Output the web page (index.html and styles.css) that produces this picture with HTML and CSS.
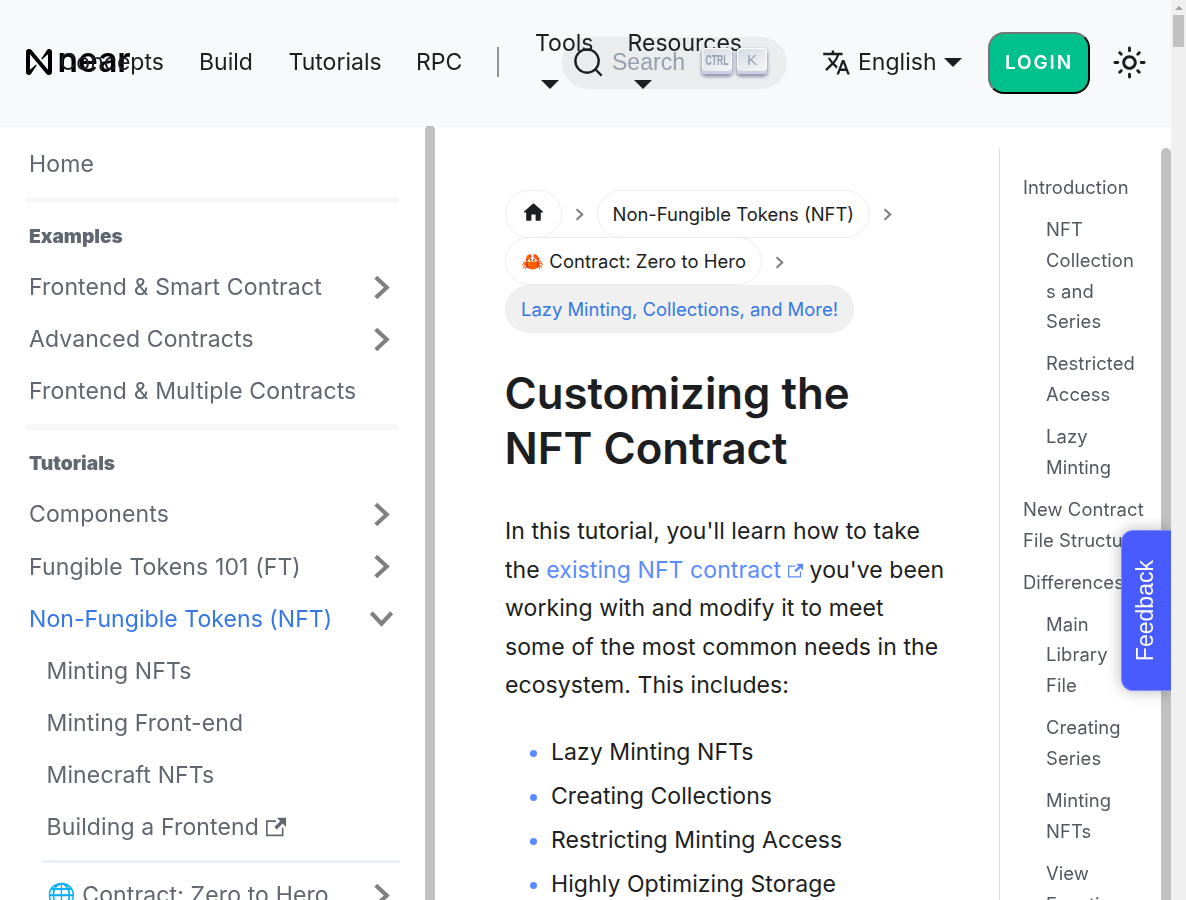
FILE: index.html
```html
<!DOCTYPE html>
<html lang="en">
<head>
<meta charset="utf-8">
<title>Customizing the NFT Contract</title>
<link rel="stylesheet" href="styles.css">
</head>
<body>
<svg class="defs" width="0" height="0">
  <symbol id="chev" viewBox="0 0 24 24"><path d="M6.5 2.2L17 12 6.500 21.800" fill="none" stroke="currentColor" stroke-width="4"/></symbol>
  <symbol id="ext" viewBox="0 0 24 24"><path fill="currentColor" d="M21 13v10h-21v-19h12v2h-10v15h17v-8h2zm3-12h-10.988l4.035 4-6.977 7.07 2.828 2.828 6.977-7.07 4.125 4.172v-11z"/></symbol>
</svg>
<div class="page">
  <header class="navbar">
    <a class="brand">
      <svg class="brand-mark" viewBox="0 0 90 90"><path d="M72.2,4.600L53.400,32.500c-1.300,1.900,1.200,4.200,3,2.600L74.900,19c.5-.4,1.200-.1,1.200.6v50.300c0,.7-.9,1-1.300.5L19,3.500C17.200,1.300,14.500,0,11.600,0H9.600C4.300,0,0,4.300,0,9.600v70.800C0,85.700,4.300,90,9.600,90c3.300,0,6.400-1.700,8.200-4.600l18.800-27.900c1.300-1.900-1.200-4.200-3-2.600L15.100,70.900c-.5.4-1.200.1-1.200-.6V20.100c0-.7.9-1,1.300-.5l55.800,66.900c1.800,2.200,4.600,3.500,7.400,3.500h2c5.300,0,9.600-4.300,9.600-9.600V9.600C90,4.300,85.700,0,80.400,0c-3.300,0-6.400,1.700-8.200,4.600z"/></svg>
      <span class="brand-name">near</span>
    </a>
    <nav class="links">
      <a class="concepts">Concepts</a><a class="build">Build</a><a class="tutorials">Tutorials</a><a class="rpc">RPC</a>
      <span class="sep"></span>
      <a class="drop tools">Tools<i class="caret"></i></a>
      <a class="drop resources">Resources<i class="caret"></i></a>
    </nav>
    <div class="search">
      <svg class="search-icon" viewBox="0 0 20 20"><path d="M14.386 14.386l4.0877 4.0877-4.0877-4.0877c-2.9418 2.9419-7.7115 2.9419-10.6533 0-2.9419-2.9418-2.9419-7.7115 0-10.6533 2.9418-2.9419 7.7115-2.9419 10.6533 0 2.9419 2.9418 2.9419 7.7115 0 10.6533z"/></svg>
      <span class="search-label">Search</span>
      <span class="key"><span class="ctrl">CTRL</span></span><span class="key">K</span>
    </div>
    <div class="tools-right">
      <svg class="translate" viewBox="0 0 24 24"><path fill="currentColor" d="M12.87 15.07l-2.54-2.51.03-.03c1.74-1.94 2.98-4.17 3.71-6.53H17V4h-7V2H8v2H1v1.99h11.17C11.5 7.92 10.44 9.75 9 11.35 8.07 10.32 7.3 9.19 6.69 8h-2c.73 1.63 1.73 3.17 2.98 4.56l-5.09 5.02L4 19l5-5 3.11 3.11.76-2.04zM18.5 10h-2L12 22h2l1.12-3h4.75L21 22h2l-4.5-12zm-2.62 7l1.62-4.33L19.12 17h-3.24z"/></svg>
      <a class="lang">English</a><i class="caret"></i>
      <button class="login">LOGIN</button>
      <svg class="sun" viewBox="0 0 24 24"><path fill="currentColor" d="M12,9c1.65,0,3,1.35,3,3s-1.35,3-3,3s-3-1.35-3-3S10.35,9,12,9 M12,7c-2.76,0-5,2.24-5,5s2.24,5,5,5s5-2.24,5-5 S14.76,7,12,7L12,7z M2,13l2,0c0.55,0,1-0.45,1-1s-0.45-1-1-1l-2,0c-0.55,0-1,0.45-1,1S1.45,13,2,13z M20,13l2,0c0.55,0,1-0.45,1-1 s-0.45-1-1-1l-2,0c-0.55,0-1,0.45-1,1S19.45,13,20,13z M11,2v2c0,0.55,0.45,1,1,1s1-0.45,1-1V2c0-0.55-0.45-1-1-1S11,1.45,11,2z M11,20v2c0,0.55,0.45,1,1,1s1-0.45,1-1v-2c0-0.55-0.45-1-1-1C11.45,19,11,19.45,11,20z M5.99,4.58c-0.39-0.39-1.03-0.39-1.41,0 c-0.39,0.39-0.39,1.03,0,1.41l1.06,1.06c0.39,0.39,1.03,0.39,1.41,0s0.39-1.03,0-1.41L5.99,4.58z M18.36,16.95 c-0.39-0.39-1.03-0.39-1.41,0c-0.39,0.39-0.39,1.03,0,1.41l1.06,1.06c0.39,0.39,1.03,0.39,1.41,0c0.39-0.39,0.39-1.03,0-1.41 L18.36,16.95z M19.42,5.99c0.39-0.39,0.39-1.03,0-1.41c-0.39-0.39-1.03-0.39-1.41,0l-1.06,1.06c-0.39,0.39-0.39,1.03,0,1.41 s1.03,0.39,1.41,0L19.42,5.99z M7.05,18.36c0.39-0.39,0.39-1.03,0-1.41c-0.39-0.39-1.03-0.39-1.41,0l-1.06,1.06 c-0.39,0.39-0.39,1.03,0,1.41s1.03,0.39,1.41,0L7.05,18.36z"/></svg>
    </div>
  </header>
  <div class="body">
    <aside class="sidebar">
      <div class="menu">
        <a class="row">Home</a>
        <div class="rule"></div>
        <div class="heading">Examples</div>
        <a class="row">Frontend &amp; Smart Contract<svg class="chev"><use href="#chev"/></svg></a>
        <a class="row">Advanced Contracts<svg class="chev"><use href="#chev"/></svg></a>
        <a class="row">Frontend &amp; Multiple Contracts</a>
        <div class="rule"></div>
        <div class="heading">Tutorials</div>
        <a class="row">Components<svg class="chev"><use href="#chev"/></svg></a>
        <a class="row">Fungible Tokens 101 (FT)<svg class="chev"><use href="#chev"/></svg></a>
        <a class="row active">Non-Fungible Tokens (NFT)<svg class="chev open"><use href="#chev"/></svg></a>
        <a class="row sub">Minting NFTs</a>
        <a class="row sub">Minting Front-end</a>
        <a class="row sub">Minecraft NFTs</a>
        <a class="row sub">Building a Frontend<svg class="ext-menu"><use href="#ext"/></svg></a>
        <div class="rule sub-rule"></div>
        <a class="row sub">🌐 Contract: Zero to Hero<svg class="chev"><use href="#chev"/></svg></a>
      </div>
      <div class="track"></div>
    </aside>
    <main class="content">
      <div class="crumbs">
        <div class="crumb-line">
          <a class="pill home"><svg viewBox="0 0 24 24"><path fill="currentColor" d="M10 19v-5h4v5c0 .55.45 1 1 1h3c.55 0 1-.45 1-1v-7h1.700c.46 0 .68-.57.33-.87L12.670 3.600c-.38-.34-.96-.34-1.340 0l-8.360 7.530c-.34.3-.13.87.33.87H5v7c0 .55.45 1 1 1h3c.55 0 1-.45 1-1z"/></svg></a><svg class="crumb-chev"><use href="#chev"/></svg>
          <a class="pill">Non-Fungible Tokens (NFT)</a><svg class="crumb-chev"><use href="#chev"/></svg>
        </div>
        <div class="crumb-line"><a class="pill hero">🦀 Contract: Zero to Hero</a><svg class="crumb-chev"><use href="#chev"/></svg></div>
        <div class="crumb-line"><a class="pill current">Lazy Minting, Collections, and More!</a></div>
      </div>
      <h1>Customizing the<br>NFT Contract</h1>
      <p class="lead">In this tutorial, you'll learn how to take<br>the <a class="link">existing NFT contract<svg class="ext-link"><use href="#ext"/></svg></a> you've been<br>working with and modify it to meet<br>some of the most common needs in the<br>ecosystem. This includes:</p>
      <ul class="list"><li>Lazy Minting NFTs</li><li>Creating Collections</li><li>Restricting Minting Access</li><li>Highly Optimizing Storage</li></ul>
    </main>
    <aside class="toc">
      <div class="toc-list">
        <a>Introduction</a>
        <a class="in">NFT<br>Collection<br>s and<br>Series</a>
        <a class="in">Restricted<br>Access</a>
        <a class="in">Lazy<br>Minting</a>
        <a>New Contract<br>File Structure</a>
        <a>Differences</a>
        <a class="in">Main<br>Library<br>File</a>
        <a class="in">Creating<br>Series</a>
        <a class="in">Minting<br>NFTs</a>
        <a class="in">View<br>Function</a>
      </div>
      <div class="track rounded"></div>
    </aside>
  </div>
  <div class="feedback"><span>Feedback</span></div>
</div>
<div class="scrollbar"><i class="up"></i><div class="thumb"></div></div>
</body>
</html>
```
FILE: styles.css
```css
* { box-sizing: border-box; }
html, body { height: 100%; }
body { margin: 0; display: flex; overflow: hidden; background: #fff; color: #1c1e21; font-family: Inter, "Noto Sans", sans-serif; font-size: 23.040px; text-rendering: optimizeLegibility; }
.defs { position: absolute; }
svg { flex: none; }
.page { position: relative; width: 1171px; height: 900px; overflow: hidden; display: flex; flex-direction: column; }

.navbar { position: relative; z-index: 2; flex: none; height: 126px; padding: 0 24px 1px 26px; display: flex; align-items: center; background: #f7f9fb; box-shadow: 0 1px 1px rgba(0,0,0,.04); will-change: transform; }
.brand { display: flex; align-items: center; width: 33.500px; color: #000; white-space: nowrap; }
.brand-mark { width: 26px; height: 26px; margin-right: 5.500px; margin-top: -1px; }
.brand-name { font-size: 33.500px; font-weight: 600; line-height: 30px; letter-spacing: 0; margin-top: -5px; }
.links { position: relative; display: flex; align-items: center; height: 100%; margin-top: -1px; white-space: nowrap; }
.concepts { width: 139.500px; }
.build { width: 89.500px; }
.tutorials { width: 127.500px; }
.rpc { width: 81px; }
.sep { width: 2px; height: 30px; background: #909296; margin-right: 36px; }
.drop { display: flex; flex-direction: column; gap: 23px; width: 92.500px; line-height: 28px; margin-top: -6px; }
.caret { width: 0; height: 0; border: 9px solid transparent; border-top-color: #1c1e21; border-bottom: 0; }
.drop .caret { margin-left: 6px; }

.search { position: absolute; left: 562px; top: 37px; width: 225px; height: 52px; border-radius: 26px; background: rgba(28,30,33,.06); display: flex; align-items: center; padding-left: 11px; }
.search-icon { width: 31px; height: 31px; margin-right: 8px; margin-top: -1px; fill: none; stroke: #1c1e21; stroke-width: 1.500; stroke-linecap: round; }
.search-label { width: 89.500px; margin-top: -2px; color: #969faf; font: 23.040px "Liberation Sans", sans-serif; }
.key { width: 30px; height: 26px; margin-right: 5.500px; margin-top: -4px; border-radius: 4px; background: linear-gradient(-26deg, #f8f8f8, #d5dbe4); box-shadow: inset 0 -3px 0 0 #cdcde6, inset 0 0 1px 1px #fff, 0 2px 3px 1px rgba(30,35,90,.4); color: #969faf; display: flex; align-items: center; justify-content: center; font: 15px/1 "Liberation Sans", sans-serif; padding-bottom: 4px; }
.ctrl { font-size: 15px; font-weight: 700; transform: scaleX(.58); }

.tools-right { margin-left: auto; margin-top: -1px; display: flex; align-items: center; }
.translate { width: 29px; height: 29px; margin-right: 7.500px; }
.lang { width: 86px; }
.login { width: 102px; height: 62px; margin: 1px 22px 0 26px; padding: 0; border: 2px outset #1c1e21; border-color: #767676 #1c1e21 #1c1e21 #767676; border-radius: 16px; background: #00c08b; color: #fff; font: 600 19px Inter, sans-serif; letter-spacing: 1.900px; }
.sun { width: 35px; height: 35px; }

.body { flex: 1; min-height: 0; display: flex; margin-top: -1px; }
.sidebar { width: 435px; flex: none; display: flex; will-change: transform; overflow: hidden; }
.menu { width: 425px; padding: 13px 26px 0; color: #606770; letter-spacing: .12px; }
.row { display: flex; align-items: center; height: 52.1px; padding: 0 5px 0 3px; white-space: nowrap; }
.row.sub { padding-left: 20.500px; }
.row.active { color: #3578e5; letter-spacing: .05px; }
.rule { height: 6px; margin: 7px 0 7px; background: #f7f7f7; }
.sub-rule { height: 3px; margin: 7px -1px 6px 16px; background: #e7f0fb; }
.heading { height: 51px; line-height: 53px; padding-left: 3px; font-size: 19.200px; font-weight: 900; letter-spacing: 0; }
.chev { width: 25px; height: 25px; margin-left: auto; color: #808080; }
.chev.open { transform: rotate(90deg); }
.ext-menu { width: 20px; height: 20px; margin-left: 7px; }
.track { width: 10px; background: #c1c1c1; border-radius: 5px 5px 0 0; }

.content { width: 564px; flex: none; padding: 65px 0 0 70px; }
.crumbs { font-size: 18.430px; }
.crumb-line { display: flex; align-items: center; height: 47.500px; white-space: nowrap; }
.pill { height: 48px; display: flex; align-items: center; padding: 0 15px; border: 1px solid #ededed; border-radius: 24px; }
.hero { letter-spacing: .08px; }
.pill svg { width: 25px; height: 25px; margin: -2px 0 0 -0.500px; }
.current { color: #3578e5; background: #f0f0f0; }
.crumb-chev { width: 13px; height: 13px; margin: 2px 11px 0 11px; color: #808080; }
h1 { margin: 34.500px 0 0 -0.500px; font-size: 43.780px; line-height: 54.700px; font-weight: 600; white-space: nowrap; }
.lead { margin: 36px 0 0; line-height: 38.400px; white-space: nowrap; letter-spacing: .07px; }
.link { color: #5b8cff; }
.ext-link { width: 15px; height: 15px; margin-left: 7px; }
.list { margin: 28.500px 0 0; padding-left: 46px; list-style: none; line-height: 38.400px; letter-spacing: .05px; }
.list li { display: flex; align-items: center; margin-bottom: 5.600px; }
.list li::before { content: ""; width: 7px; height: 7px; margin: 3px 14px 0 -21px; border-radius: 50%; background: #5b8cff; }

.toc { flex: 1; margin-top: 23px; display: flex; border-left: 1px solid #dadde1; overflow: hidden; will-change: transform; }
.toc-list { flex: 1; padding-left: 23px; padding-top: 24px; font-size: 18.430px; line-height: 30.700px; letter-spacing: .08px; color: #525860; white-space: nowrap; overflow: hidden; }
.toc-list a { display: block; margin-bottom: 11.400px; }
.toc-list .in { padding-left: 23px; }

.feedback { position: absolute; z-index: 3; left: 1121px; top: 530px; width: 50px; height: 161px; border: 1px solid #7d8aff; border-right: 0; border-radius: 12px 0 0 12px; background: #485bff; box-shadow: 0 0 16px rgba(0,0,0,.28); color: #fff; display: flex; align-items: center; justify-content: center; padding-right: 2px; font: 23.040px "Liberation Sans", sans-serif; }
.feedback span { writing-mode: vertical-rl; transform: rotate(180deg); }
.scrollbar { width: 15px; flex: none; background: #f0f0f0; padding: 6px 2px 0; }
.up { display: block; width: 0; height: 0; margin: 0 auto 5px; border: 4px solid transparent; border-top: 0; border-bottom-color: #a0a0a0; }
.thumb { height: 32px; background: #c1c1c1; }
```
